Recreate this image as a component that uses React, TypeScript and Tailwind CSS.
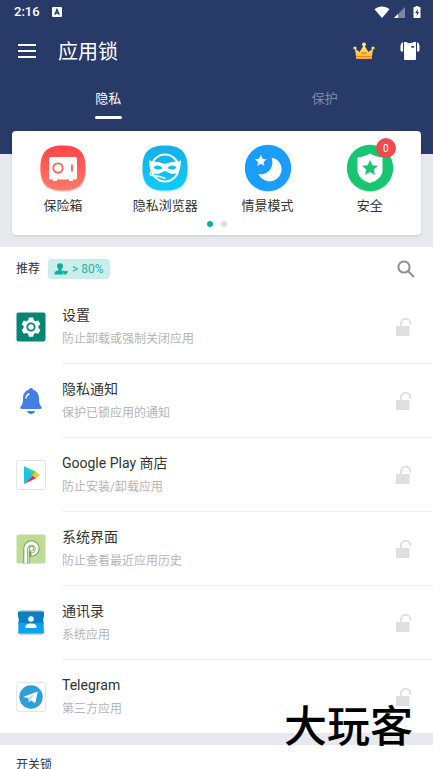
import React from 'react';

interface Shortcut {
  label: string;
  icon: React.ReactNode;
  badge?: number;
}

interface AppItem {
  name: string;
  description: string;
  icon: React.ReactNode;
}

const SafeIcon = () => (
  <svg viewBox="0 0 48 48" className="size-12">
    <defs>
      <linearGradient id="safeBg" x1="0" y1="0" x2="0" y2="1">
        <stop offset="0" stopColor="#ff4447" />
        <stop offset="1" stopColor="#ff7a6c" />
      </linearGradient>
    </defs>
    <path d="M24 3C40 3 47 8 47 25S40 48 24 48 1 42 1 25 8 3 24 3Z" fill="#ffd5d0" />
    <path d="M24 1.500C40 1.500 46.500 8 46.500 24S40 46.500 24 46.500 1.500 40 1.500 24 8 1.500 24 1.500Z" fill="url(#safeBg)" />
    <rect x="10" y="13" width="28" height="22.500" rx="1.500" fill="#fff" />
    <path d="M14 35h4v2h-4zM30 35h4v2h-4z" fill="#fff" />
    <circle cx="19" cy="24" r="4.700" fill="none" stroke="#ff5e58" strokeWidth="1.800" />
    <path d="M33 20.500v7" stroke="#ff5e58" strokeWidth="1.800" />
  </svg>
);

const MaskIcon = () => (
  <svg viewBox="0 0 48 48" className="size-12">
    <defs>
      <linearGradient id="maskBg" x1="0" y1="0" x2="0" y2="1">
        <stop offset="0" stopColor="#16aee9" />
        <stop offset="1" stopColor="#0bcdfd" />
      </linearGradient>
    </defs>
    <path d="M24 3C40 3 47 8 47 25S40 48 24 48 1 42 1 25 8 3 24 3Z" fill="#c4effc" />
    <path d="M24 1.500C40 1.500 46.500 8 46.500 24S40 46.500 24 46.500 1.500 40 1.500 24 8 1.500 24 1.500Z" fill="url(#maskBg)" />
    <circle cx="24" cy="24" r="13.500" fill="none" stroke="#fff" strokeWidth="2" />
    <path d="M8 16.500C13 18.500 19 17.500 24 20c5-2.500 11-1.500 16-3.500 0 8-2.500 13.500-8 13.500-4 0-6-3-8-3s-4 3-8 3C10.500 30 8 24.500 8 16.500Z" fill="#fff" />
    <path d="M11 27.500c-2.500.5-2.500 4 .5 4 4 0 8 1 13 3" fill="none" stroke="#fff" strokeWidth="1.400" />
    <path d="M12.500 23.500c3-3 7-2.500 9 .7-3 2-6.500 2-9-.7ZM35.500 23.500c-3-3-7-2.500-9 .7 3 2 6.500 2 9-.7Z" fill="#12bdf3" />
  </svg>
);

const MoonIcon = () => (
  <svg viewBox="0 0 48 48" className="size-12">
    <circle cx="24" cy="25" r="23" fill="#c8ecfc" />
    <circle cx="24" cy="24" r="23.200" fill="#1b9dfc" />
    <path d="M27.500 13.500A12 12 0 1 1 14.500 30c6.500 2 17-5 13-16.500Z" fill="#fff" />
    <path d="m16.800 11 1.700 3.800 4.100.4-3.100 2.700.9 4.100-3.600-2.200-3.600 2.200.9-4.100-3.100-2.700 4.100-.4Z" fill="#fff" />
  </svg>
);

const ShieldIcon = () => (
  <svg viewBox="0 0 48 48" className="size-12">
    <circle cx="24" cy="25" r="23" fill="#c6f3dc" />
    <circle cx="24" cy="24" r="23.200" fill="#17c671" />
    <path d="M24 9.500c4 2.500 8 3.500 12.500 4V26c0 6-5 11-12.500 13-7.500-2-12.500-7-12.500-13V13.500c4.500-.5 8.500-1.500 12.500-4Z" fill="#fff" />
    <path d="m24 16 2.300 5.200 5.600.5-4.200 3.700 1.300 5.500-5-2.900-5 2.900 1.300-5.500-4.200-3.700 5.600-.5Z" fill="#17c671" />
  </svg>
);

const CrownIcon = () => (
  <svg viewBox="0 0 22 18" className="h-[18px] w-[22px]">
    <defs>
      <linearGradient id="crown" x1="0" y1="0" x2="0" y2="1">
        <stop offset="0" stopColor="#fff46e" />
        <stop offset="1" stopColor="#ffa938" />
      </linearGradient>
    </defs>
    <path d="M2 6.500 6.500 10 11 3l4.500 7L20 6.500 18.700 17H3.300Z" fill="url(#crown)" />
    <path d="M3.200 14.500h15.600" stroke="#ea7a24" strokeWidth=".8" />
    <path d="M8.500 10.500q2.500 2 5 0" fill="none" stroke="#c5661b" strokeWidth="1" />
    <circle cx="11" cy="2.500" r="2" fill="#ffe773" />
    <circle cx="2" cy="6" r="1.600" fill="#ffe773" />
    <circle cx="20" cy="6" r="1.600" fill="#ffe773" />
  </svg>
);

const ShirtIcon = () => (
  <svg viewBox="0 0 20 20" className="size-5" fill="#fff">
    <path d="M4 1h2.500c1.500 1.600 5.500 1.600 7 0H16v17q0 1-1 1H5q-1 0-1-1Z" />
    <path d="M3 1v9.500H1.500Q.5 10.500.5 9V5q0-3 2.500-4ZM17 1v9.500h1.500q1 0 1-1.500V5q0-3-2.500-4Z" />
    <path d="M11.300 5h2.700v1.700h-2.700z" fill="#283a68" />
  </svg>
);

const UnlockIcon = () => (
  <svg viewBox="0 0 16 18" className="h-[18px] w-4">
    <path d="M5 9V5.500a4.700 4.700 0 0 1 9.400 0V6.500" fill="none" stroke="#e0e0e0" strokeWidth="2" />
    <rect x="0" y="8" width="13.500" height="10" rx=".5" fill="#dfdfdf" />
  </svg>
);

const SettingsIcon = () => (
  <svg viewBox="0 0 30 30" className="size-[30px]">
    <rect x=".5" y=".5" width="29" height="29" rx="2" fill="#068574" />
    <path
      d="M12.800 5.500h4.400l.6 2.700 1.800 1 2.600-.8 2.200 3.800-2 1.900v2l2 1.900-2.200 3.800-2.600-.8-1.800 1-.6 2.700h-4.400l-.6-2.700-1.800-1-2.600.8L5.600 18l2-1.900v-2l-2-1.900 2.200-3.800 2.600.8 1.800-1Z"
      fill="#fff"
    />
    <circle cx="15" cy="15" r="3.700" fill="#fff" stroke="#068574" strokeWidth="1.800" />
  </svg>
);

const BellIcon = () => (
  <svg viewBox="0 0 30 30" className="size-[30px]">
    <circle cx="15" cy="4.200" r="2.200" fill="#437fe3" />
    <path d="M15 3.500c5.300 0 8 4 8 9 0 4.500.7 6.500 2.300 8 .8 1 .3 2.500-1 2.500H5.700c-1.300 0-1.800-1.500-1-2.500C6.300 19 7 17 7 12.500c0-5 2.700-9 8-9Z" fill="#437fe3" />
    <path d="M11 25h8c-.6 4-7.400 4-8 0Z" fill="#437fe3" />
    <path d="M10 12c.3-2.200 1.300-3.500 3-4" fill="none" stroke="#fff" strokeWidth="1.400" strokeLinecap="round" />
  </svg>
);

const PlayIcon = () => (
  <svg viewBox="0 0 30 30" className="size-[30px]">
    <rect x=".5" y=".5" width="29" height="29" rx="2" fill="#fff" stroke="#e4e4e4" />
    <path d="M8 6v18l9-9Z" fill="#12c4f2" />
    <path d="m8 6 12.500 6-4 3.500Z" fill="#34d58f" />
    <path d="m8 24 8.500-8.500 4 2.500Z" fill="#d9364f" />
    <path d="m20 11.800 4 3.200-4 3.200-3.700-3.200Z" fill="#fbcb1c" />
  </svg>
);

const PieIcon = () => (
  <svg viewBox="0 0 30 30" className="size-[30px]">
    <rect x=".5" y=".5" width="29" height="29" rx="2" fill="#bddc96" />
    <path d="M10.500 29.500V14.500a5 5 0 1 1 5 5q-2 0-2-2" fill="none" stroke="#74a548" strokeWidth="6.400" />
    <path d="M10.500 29.500V14.500a5 5 0 1 1 5 5" fill="none" stroke="#fff" strokeWidth="4.400" />
    <circle cx="15.500" cy="14.500" r="1.800" fill="#fff" />
    <path d="M11.500 29.500V15a4 4 0 1 1 4 4" fill="none" stroke="#74a548" strokeWidth=".8" />
  </svg>
);

const ContactsIcon = () => (
  <svg viewBox="0 0 30 30" className="size-[30px]">
    <path d="M4 2h22l1.500 3h-25Z" fill="#c9cdd0" />
    <path d="M4 27h22l1-3H3Z" fill="#c9cdd0" />
    <path d="M2 3.500h26v5q-1.500 3 0 8H2q1.500-5 0-8Z" fill="#0c7fc4" />
    <path d="M2.500 15h25L28 25.500H2.200Z" fill="#0aa3ee" />
    <circle cx="15" cy="11" r="2.800" fill="#fff" />
    <path d="M9.500 20v-1.500c0-4 11-4 11 0V20Z" fill="#fff" />
  </svg>
);

const TelegramIcon = () => (
  <svg viewBox="0 0 30 30" className="size-[30px]">
    <rect x=".5" y=".5" width="29" height="29" rx="2" fill="#fff" stroke="#e6e6e6" />
    <circle cx="15" cy="15" r="11.700" fill="#2f9fd9" />
    <path d="m7 15 14.800-5.600-2.600 11.800-4.200-3-2 2-.7-4.200Z" fill="#fff" />
    <path d="m12.300 16 6.700-4.500-4.800 6.200-1.200 2.500Z" fill="#b9d9ec" />
  </svg>
);

const shortcuts: Shortcut[] = [
  { label: '保险箱', icon: <SafeIcon /> },
  { label: '隐私浏览器', icon: <MaskIcon /> },
  { label: '情景模式', icon: <MoonIcon /> },
  { label: '安全', icon: <ShieldIcon />, badge: 0 },
];

const apps: AppItem[] = [
  { name: '设置', description: '防止卸载或强制关闭应用', icon: <SettingsIcon /> },
  { name: '隐私通知', description: '保护已锁应用的通知', icon: <BellIcon /> },
  { name: 'Google Play 商店', description: '防止安装/卸载应用', icon: <PlayIcon /> },
  { name: '系统界面', description: '防止查看最近应用历史', icon: <PieIcon /> },
  { name: '通讯录', description: '系统应用', icon: <ContactsIcon /> },
  { name: 'Telegram', description: '第三方应用', icon: <TelegramIcon /> },
];

const StatusBar = () => (
  <div className="flex h-6 items-center justify-between pl-3.5 pr-3">
    <div className="flex items-center gap-3 text-[13px] font-medium">
      <span>2:16</span>
      <svg viewBox="0 0 10 10" className="size-2.5">
        <rect width="10" height="10" rx="1" fill="#fff" />
        <path d="M2.800 7.800 5 2.500l2.200 5.300M3.500 6h3" fill="none" stroke="#283a68" strokeWidth="1.300" />
      </svg>
    </div>
    <div className="flex items-center gap-1">
      <svg viewBox="0 0 16 12" className="h-3 w-4">
        <path d="M.5 3.200C5-.5 11-.5 15.500 3.200L8 12Z" fill="#fff" />
      </svg>
      <svg viewBox="0 0 11 11" className="size-[11px]">
        <path d="M11 0v11H0Z" fill="#7a86a5" />
        <path d="M4 7v4H0Z" fill="#fff" />
      </svg>
      <svg viewBox="0 0 8 12" className="ml-1 h-3 w-2">
        <path d="M2.500 0h3v1H7q.5 0 .5.500v10q0 .5-.5.500H1q-.5 0-.5-.5v-10Q.5 1 1 1h1.500Z" fill="#fff" />
        <path d="M4.800 3 2.200 7h1.600v3l2.200-4H4.500Z" fill="#283a68" />
      </svg>
    </div>
  </div>
);

export default function App() {
  return (
    <div className="relative flex h-screen flex-col overflow-hidden bg-[#e8e9ef] font-[Roboto,'Noto_Sans_CJK_SC',sans-serif] text-[#333333]">
      <header className="h-[154px] shrink-0 bg-[#283a68] text-white">
        <StatusBar />
        <div className="flex h-[53px] items-center pl-[18px] pr-[13px]">
          <button aria-label="Menu" className="flex w-[18px] flex-col gap-1">
            <span className="h-0.5 bg-white" />
            <span className="h-0.5 bg-white" />
            <span className="h-0.5 bg-white" />
          </button>
          <h1 className="ml-[22px] flex-1 pt-0.5 text-xl">应用锁</h1>
          <div className="flex items-center gap-[25px]">
            <button aria-label="Premium">
              <CrownIcon />
            </button>
            <button aria-label="Themes">
              <ShirtIcon />
            </button>
          </div>
        </div>
        <nav className="grid grid-cols-2 text-[13px]">
          <button className="flex flex-col items-center gap-[7px] pt-3">
            <span className="leading-5">隐私</span>
            <span className="h-[3px] w-[27px] rounded-full bg-white" />
          </button>
          <button className="flex flex-col items-center pt-3 text-[#7d89a8]">
            <span className="leading-5">保护</span>
          </button>
        </nav>
      </header>

      <section className="relative mx-3 -mt-[23px] mb-3 h-[104px] shrink-0 rounded bg-white shadow-sm">
        <div className="grid grid-cols-4 pt-[13px]">
          {shortcuts.map((item) => (
            <button key={item.label} className="flex flex-col items-center text-[13px]">
              <span className="relative">
                {item.icon}
                {item.badge !== undefined && (
                  <span className="absolute -right-0.5 -top-1.5 flex size-5 items-center justify-center rounded-full bg-[#ec4b50] text-[10px] text-white">
                    {item.badge}
                  </span>
                )}
              </span>
              <span className="mt-1 leading-5">{item.label}</span>
            </button>
          ))}
        </div>
        <div className="mt-[5px] flex justify-center gap-2">
          <span className="size-1.5 rounded-full bg-[#0bb09c]" />
          <span className="size-1.5 rounded-full bg-[#dedede]" />
        </div>
      </section>

      <main className="shrink-0 bg-white">
        <div className="flex h-[43px] items-center pl-4 pr-[18px]">
          <h2 className="text-xs">推荐</h2>
          <span className="ml-2 flex h-5 items-center gap-1 rounded bg-[#cceeea] px-1.5 text-xs text-[#18b5a1]">
            <svg viewBox="0 0 14 12" className="h-3 w-3.5" fill="#0fae9b">
              <circle cx="6" cy="3.200" r="3" />
              <path d="M4.500 5.500h3v2l1.500.5q-1.500 2 1 3.500H.5Q0 8 4.500 7.300Z" />
              <path d="M11.200 12 8.800 9.600c-.8-1.800 1.500-2.600 2.400-1 .9-1.600 3.200-.8 2.400 1Z" />
            </svg>
            &gt; 80%
          </span>
          <button aria-label="Search" className="ml-auto">
            <svg viewBox="0 0 18 18" className="size-[18px]" fill="none" stroke="#909090" strokeWidth="2">
              <circle cx="7" cy="7" r="5.600" />
              <path d="m11 11 6 6" />
            </svg>
          </button>
        </div>

        <ul>
          {apps.map((app) => (
            <li key={app.name} className="group flex h-[74px] items-center pl-4 last:h-[73px]">
              <span className="shrink-0">{app.icon}</span>
              <div className="ml-4 flex h-full flex-1 items-center justify-between border-b border-[#f0f0f0] pr-[21px] group-last:border-b-0">
                <div>
                  <h3 className="text-sm leading-6">{app.name}</h3>
                  <p className="text-xs leading-6 text-[#b5b5b5]">{app.description}</p>
                </div>
                <button aria-label={app.name}>
                  <UnlockIcon />
                </button>
              </div>
            </li>
          ))}
        </ul>
      </main>

      <section className="mt-3 shrink-0 bg-white pb-4 pl-4 pt-2.5">
        <h2 className="text-xs leading-5">开关锁</h2>
      </section>

      <span className="absolute bottom-5 right-5 font-['Noto_Sans_CJK_SC',sans-serif] text-[43px] font-medium leading-[52px] text-black">
        大玩客
      </span>
    </div>
  );
}
